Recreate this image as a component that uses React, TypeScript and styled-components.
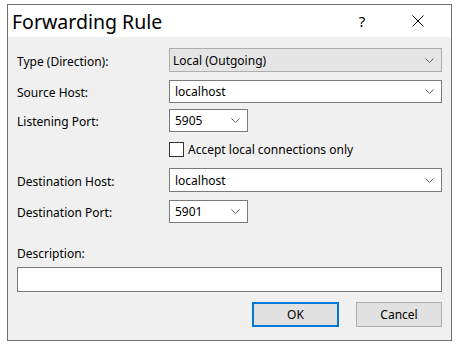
import React from "react";
import styled, { createGlobalStyle } from "styled-components";

const Global = createGlobalStyle`
  html, body { margin: 0; padding: 0; background: #ffffff; }
  body { font-family: "Noto Sans", "Open Sans", sans-serif; font-size: 12px; color: #000; }
  * { box-sizing: border-box; }
`;

const Window = styled.div`
  margin: 4px 0 0 7px;
  width: 445px;
  height: 337px;
  border: 1px solid #707070;
  display: flex;
  flex-direction: column;
  background: #f0f0f0;
`;

const TitleBar = styled.div`
  height: 32px;
  background: #ffffff;
  display: flex;
  align-items: center;
  padding-left: 4px;
`;

const Title = styled.div`
  flex: 1;
  font-size: 19.5px;
  line-height: 26px;
  margin-top: 1px;
`;

const TitleButton = styled.div<{ $w: number }>`
  width: ${(p) => p.$w}px;
  height: 32px;
  display: flex;
  align-items: center;
  justify-content: center;
  font-size: 15px;
  color: #000;
`;

const Body = styled.div`
  flex: 1;
  padding: 11px 9px 0 9px;
  display: flex;
  flex-direction: column;
`;

const Row = styled.div<{ $mt: number; $h: number }>`
  margin-top: ${(p) => p.$mt}px;
  height: ${(p) => p.$h}px;
  display: grid;
  grid-template-columns: 152px 1fr;
  align-items: center;
`;

const Label = styled.div`
  padding-top: 2px;
  white-space: nowrap;
`;

const Combo = styled.div<{ $w?: number; $ro?: boolean }>`
  width: ${(p) => (p.$w ? `${p.$w}px` : "100%")};
  height: 100%;
  border: 1px solid ${(p) => (p.$ro ? "#adadad" : "#7a7a7a")};
  background: ${(p) => (p.$ro ? "#e5e5e5" : "#ffffff")};
  display: flex;
  align-items: center;
  padding: 0 7px 0 ${(p) => (p.$ro ? 3 : 5)}px;
  white-space: nowrap;
`;

const ComboText = styled.span`
  flex: 1;
`;

const Chevron = () => (
  <svg width="9" height="5" viewBox="0 0 9 5" style={{ display: "block" }}>
    <path d="M0.5 0.5 L4.5 4.5 L8.5 0.5" fill="none" stroke="#606060" strokeWidth="1" />
  </svg>
);

const CheckLine = styled.label`
  display: flex;
  align-items: center;
  gap: 4px;
  white-space: nowrap;
`;

const Box = styled.span`
  width: 15px;
  height: 15px;
  border: 1px solid #333333;
  background: #ffffff;
  flex: none;
`;

const DescLabel = styled.div`
  margin-top: 23px;
  line-height: 16px;
`;

const Input = styled.div`
  margin-top: 5px;
  height: 25px;
  border: 1px solid #7a7a7a;
  background: #ffffff;
`;

const Buttons = styled.div`
  margin-top: 10px;
  display: flex;
  justify-content: flex-end;
  gap: 17px;
`;

const Button = styled.div<{ $default?: boolean }>`
  width: ${(p) => (p.$default ? 87 : 86)}px;
  height: 25px;
  background: #e1e1e1;
  border: ${(p) => (p.$default ? "2px solid #0078d7" : "1px solid #adadad")};
  display: flex;
  align-items: center;
  justify-content: center;
`;

export default function App() {
  return (
    <>
      <Global />
      <Window>
        <TitleBar>
          <Title>Forwarding Rule</Title>
          <TitleButton $w={46}>?</TitleButton>
          <TitleButton $w={66}>
            <svg width="12" height="12" viewBox="0 0 12 12" style={{ display: "block" }}>
              <path d="M0.5 0.5 L11.5 11.5 M11.5 0.5 L0.5 11.5" stroke="#000" strokeWidth="1" />
            </svg>
          </TitleButton>
        </TitleBar>
        <Body>
          <Row $mt={0} $h={24}>
            <Label>Type (Direction):</Label>
            <Combo $ro>
              <ComboText>Local (Outgoing)</ComboText>
              <Chevron />
            </Combo>
          </Row>
          <Row $mt={8} $h={23}>
            <Label>Source Host:</Label>
            <Combo>
              <ComboText>localhost</ComboText>
              <Chevron />
            </Combo>
          </Row>
          <Row $mt={6} $h={23}>
            <Label>Listening Port:</Label>
            <Combo $w={79}>
              <ComboText>5905</ComboText>
              <Chevron />
            </Combo>
          </Row>
          <Row $mt={9} $h={16}>
            <span />
            <CheckLine>
              <Box />
              Accept local connections only
            </CheckLine>
          </Row>
          <Row $mt={11} $h={24}>
            <Label>Destination Host:</Label>
            <Combo>
              <ComboText>localhost</ComboText>
              <Chevron />
            </Combo>
          </Row>
          <Row $mt={8} $h={23}>
            <Label>Destination Port:</Label>
            <Combo $w={79}>
              <ComboText>5901</ComboText>
              <Chevron />
            </Combo>
          </Row>
          <DescLabel>Description:</DescLabel>
          <Input />
          <Buttons>
            <Button $default>OK</Button>
            <Button>Cancel</Button>
          </Buttons>
        </Body>
      </Window>
    </>
  );
}
